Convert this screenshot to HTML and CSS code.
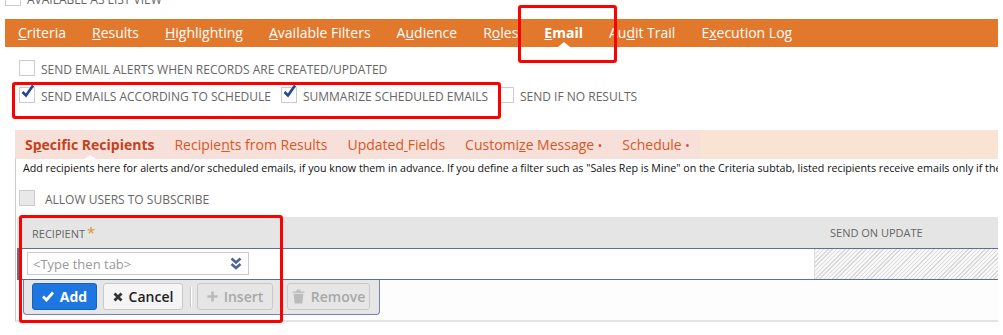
FILE: index.html
```html
<!DOCTYPE html>
<html lang="en">
<head>
    <meta charset="UTF-8">
    <meta name="viewport" content="width=device-width, initial-scale=1.0">
    <title>Saved Search - Email</title>
    <link rel="stylesheet" href="styles.css">
</head>
<body>
    <div class="page">
        <div class="top-row">
            <div class="top-row-inner">
                <span class="cb"></span>
                <span class="cb-label">Available as list view</span>
            </div>
        </div>

        <nav class="main-tabs">
            <span class="tab"><u>C</u>riteria</span>
            <span class="tab"><u>R</u>esults</span>
            <span class="tab"><u>H</u>ighlighting</span>
            <span class="tab"><u>A</u>vailable Filters</span>
            <span class="tab">A<u>u</u>dience</span>
            <span class="tab">R<u>o</u>les</span>
            <span class="tab tab-active"><u>E</u>mail</span>
            <span class="tab">Au<u>d</u>it Trail</span>
            <span class="tab">E<u>x</u>ecution Log</span>
        </nav>

        <div class="options">
            <div class="opt-row">
                <label class="opt"><span class="cb"></span><span class="cb-label">Send email alerts when records are created/updated</span></label>
            </div>
            <div class="opt-row">
                <label class="opt">
                    <span class="cb"><svg width="14" height="14" viewBox="0 0 14 14"><path d="M1.5 7 L5 10.5 L12 0.5" fill="none" stroke="#24478f" stroke-width="2.6"/></svg></span>
                    <span class="cb-label">Send emails according to schedule</span>
                </label>
                <label class="opt">
                    <span class="cb"><svg width="14" height="14" viewBox="0 0 14 14"><path d="M1.5 7 L5 10.5 L12 0.5" fill="none" stroke="#24478f" stroke-width="2.6"/></svg></span>
                    <span class="cb-label">Summarize scheduled emails</span>
                </label>
                <label class="opt"><span class="cb"></span><span class="cb-label">Send if no results</span></label>
            </div>
        </div>

        <div class="sub-panel">
            <div class="sub-tabs-bar">
                <div class="sub-tabs">
                    <span class="sub-tab sub-tab-active">S<u>p</u>ecific Recipients</span>
                    <span class="sub-tab">Recipie<u>n</u>ts from Results</span>
                    <span class="sub-tab">Updated<u> </u>Fields</span>
                    <span class="sub-tab">Customi<u>z</u>e Message <span class="dot">&bull;</span></span>
                    <span class="sub-tab">Schedule <span class="dot">&bull;</span></span>
                </div>
            </div>

            <div class="sub-body">
                <p class="desc">Add recipients here for alerts and/or scheduled emails, if you know them in advance. If you define a filter such as "Sales Rep is Mine" on the Criteria subtab, listed recipients receive emails only if they meet the criteria.</p>

                <div class="subscribe">
                    <span class="cb cb-disabled"></span>
                    <span class="cb-label">Allow users to subscribe</span>
                </div>

                <div class="grid">
                    <div class="grid-head">
                        <div class="col-recipient">Recipient<span class="req">*</span></div>
                        <div class="col-update">Send on update</div>
                    </div>
                    <div class="grid-row">
                        <div class="cell-recipient">
                            <div class="select-input">
                                <span>&lt;Type then tab&gt;</span>
                                <svg width="12" height="13" viewBox="0 0 12 13"><path d="M1.5 1.5 L6 5.5 L10.5 1.5 M1.5 7 L6 11 L10.5 7" fill="none" stroke="#4f6591" stroke-width="2.6"/></svg>
                            </div>
                        </div>
                        <div class="cell-update"></div>
                    </div>
                    <div class="btn-bar">
                        <button class="btn btn-add">
                            <svg width="12" height="11" viewBox="0 0 12 11"><path d="M1 5.5 L4.5 9 L11 1.5" fill="none" stroke="#fff" stroke-width="2.8"/></svg>
                            Add
                        </button>
                        <button class="btn btn-cancel">
                            <svg width="10" height="10" viewBox="0 0 10 10"><path d="M1.5 1.5 L8.5 8.5 M8.5 1.5 L1.5 8.5" fill="none" stroke="#333" stroke-width="2.8"/></svg>
                            Cancel
                        </button>
                        <span class="btn-divider"></span>
                        <button class="btn btn-disabled btn-insert">
                            <svg width="11" height="11" viewBox="0 0 11 11"><path d="M5.5 0.5 V10.5 M0.5 5.5 H10.5" fill="none" stroke="#bbb" stroke-width="2.6"/></svg>
                            Insert
                        </button>
                        <button class="btn btn-disabled btn-remove">
                            <svg width="13" height="15" viewBox="0 0 13 15"><path d="M0.5 2.5 H12.5 V3.8 H0.5 Z M4.5 0.8 H8.5 V2.5 H4.5 Z M1.7 4.8 H11.3 L10.4 14.5 H2.6 Z" fill="#bbb"/></svg>
                            Remove
                        </button>
                    </div>
                </div>
            </div>
        </div>

        <!-- review marks drawn over the screen -->
        <div class="mark mark-email"></div>
        <div class="mark mark-schedule"></div>
        <div class="mark mark-recipient"></div>
    </div>
</body>
</html>
```

FILE: styles.css
```css
body {
    margin: 0;
    font-family: "Open Sans", "Liberation Sans", sans-serif;
    background-color: #fff;
    overflow: hidden;
}
.page {
    position: relative;
    width: 1003px;
    height: 335px;
    padding: 0 5px;
    box-sizing: border-box;
    overflow: hidden;
}
.top-row {
    height: 19px;
    overflow: hidden;
}
.top-row-inner {
    display: flex;
    align-items: center;
    margin-top: -12px;
}
.cb {
    position: relative;
    flex: none;
    width: 16px;
    height: 16px;
    margin-right: 6px;
    border: 1px solid #ccc;
    box-sizing: border-box;
    background-color: #fff;
}
.cb svg {
    position: absolute;
    left: 1px;
    top: -3px;
    overflow: visible;
}
.cb-disabled {
    background-color: #e8e8e8;
    margin-right: 10px;
}
.cb-label {
    padding-top: 4px;
    font-size: 12px;
    line-height: 16px;
    color: #666;
    text-transform: uppercase;
    white-space: nowrap;
}

/* main tabs */
.main-tabs {
    display: flex;
    height: 28px;
    background-color: #e2782c;
}
.tab {
    position: relative;
    padding: 0 13px;
    font-size: 14px;
    line-height: 28px;
    color: #fff;
    white-space: nowrap;
}
.tab-active {
    font-weight: 700;
}
.tab-active::after {
    content: "";
    position: absolute;
    left: 50%;
    bottom: 0;
    margin-left: -6px;
    border-left: 6px solid transparent;
    border-right: 6px solid transparent;
    border-bottom: 5px solid #fff;
}

/* checkbox options */
.options {
    padding: 7px 0 0 14px;
}
.opt-row {
    display: flex;
    align-items: center;
    height: 27px;
}
.opt {
    display: flex;
    align-items: center;
    margin-right: 10px;
}

/* sub tabs panel */
.sub-panel {
    margin: 22px 0 0 10px;
}
.sub-tabs-bar {
    display: flex;
    height: 29px;
    background-color: #f9e4d4;
}
.sub-tabs {
    display: flex;
    background-color: #f8e0da;
}
.sub-tab {
    position: relative;
    padding: 0 10px;
    font-size: 14px;
    line-height: 30px;
    color: #d9561f;
    white-space: nowrap;
}
.sub-tab-active {
    font-weight: 700;
    color: #c4421a;
}
.sub-tab-active::after {
    content: "";
    position: absolute;
    left: 50%;
    bottom: 0;
    margin-left: -6px;
    border-left: 6px solid transparent;
    border-right: 6px solid transparent;
    border-bottom: 4px solid #fff;
}
.dot {
    font-size: 12px;
    color: #e0453a;
}
.sub-body {
    padding-bottom: 5px;
    border-left: 1px solid #ccc;
    border-bottom: 2px solid #e3e3e3;
    background-color: #fdfdfd;
}
.desc {
    margin: 0;
    padding: 1px 0 0 7px;
    font-size: 10.7px;
    line-height: 16px;
    color: #111;
    white-space: nowrap;
    overflow: hidden;
    background-color: #fff;
}
.subscribe {
    display: flex;
    align-items: center;
    height: 16px;
    padding: 14px 0 11px 3px;
    background-color: #fff;
}

/* recipients grid */
.grid {
    margin-left: 1px;
}
.grid-head {
    display: flex;
    height: 31px;
    background-color: #e5e5e5;
    font-size: 11px;
    line-height: 31px;
    color: #666;
    text-transform: uppercase;
}
.col-recipient {
    width: 797px;
    padding-left: 15px;
    box-sizing: border-box;
}
.col-update {
    padding-left: 16px;
}
.req {
    margin-left: 2px;
    font-size: 15px;
    color: #d49a2c;
}
.grid-row {
    display: flex;
    height: 30px;
    border-top: 1px solid #5b6e96;
    border-bottom: 1px solid #5b6e96;
    border-left: 2px solid #5b6e96;
    background-color: #fff;
}
.cell-recipient {
    width: 795px;
    padding: 3px 0 0 8px;
    box-sizing: border-box;
}
.select-input {
    display: flex;
    align-items: center;
    justify-content: space-between;
    width: 222px;
    height: 23px;
    padding: 0 6px 0 5px;
    border: 1px solid #ccc;
    box-sizing: border-box;
    font-size: 13px;
    color: #999;
}
.cell-update {
    flex: 1;
    border-left: 1px solid #ddd;
    background: repeating-linear-gradient(135deg, #dadada 0 1px, #f7f7f7 1px 3px);
}
.btn-bar {
    display: inline-flex;
    align-items: center;
    margin-left: 6px;
    padding: 3px 9px 4px 8px;
    border: 1px solid #7384a8;
    border-top: none;
    border-radius: 0 0 4px 4px;
    background-color: #e6e6e6;
}
.btn {
    display: inline-flex;
    align-items: center;
    justify-content: center;
    gap: 6px;
    height: 27px;
    padding: 0;
    border: 1px solid #c9c9c9;
    border-radius: 3px;
    box-sizing: border-box;
    font-family: "Open Sans", "Liberation Sans", sans-serif;
    font-size: 14px;
    font-weight: 600;
}
.btn-add {
    width: 65px;
    margin-right: 6px;
    background-color: #1e77e0;
    border-color: #1761bf;
    color: #fff;
    font-weight: 700;
}
.btn-cancel {
    width: 80px;
    background-color: #f5f5f5;
    color: #222;
}
.btn-divider {
    width: 1px;
    height: 20px;
    margin: 0 6px 0 7px;
    background-color: #c8c8c8;
    box-shadow: 1px 0 0 #fff;
}
.btn-disabled {
    background-color: #e6e6e6;
    color: #a8a8a8;
}
.btn-insert {
    width: 76px;
}
.btn-remove {
    width: 83px;
    margin-left: 14px;
}

/* red review marks */
.mark {
    position: absolute;
    border: 3px solid #fe0000;
    border-radius: 3px;
    box-sizing: border-box;
    pointer-events: none;
}
.mark-email {
    left: 518px;
    top: 5px;
    width: 99px;
    height: 58px;
}
.mark-schedule {
    left: 12px;
    top: 82px;
    width: 489px;
    height: 37px;
}
.mark-recipient {
    left: 19px;
    top: 215px;
    width: 264px;
    height: 108px;
}
```
